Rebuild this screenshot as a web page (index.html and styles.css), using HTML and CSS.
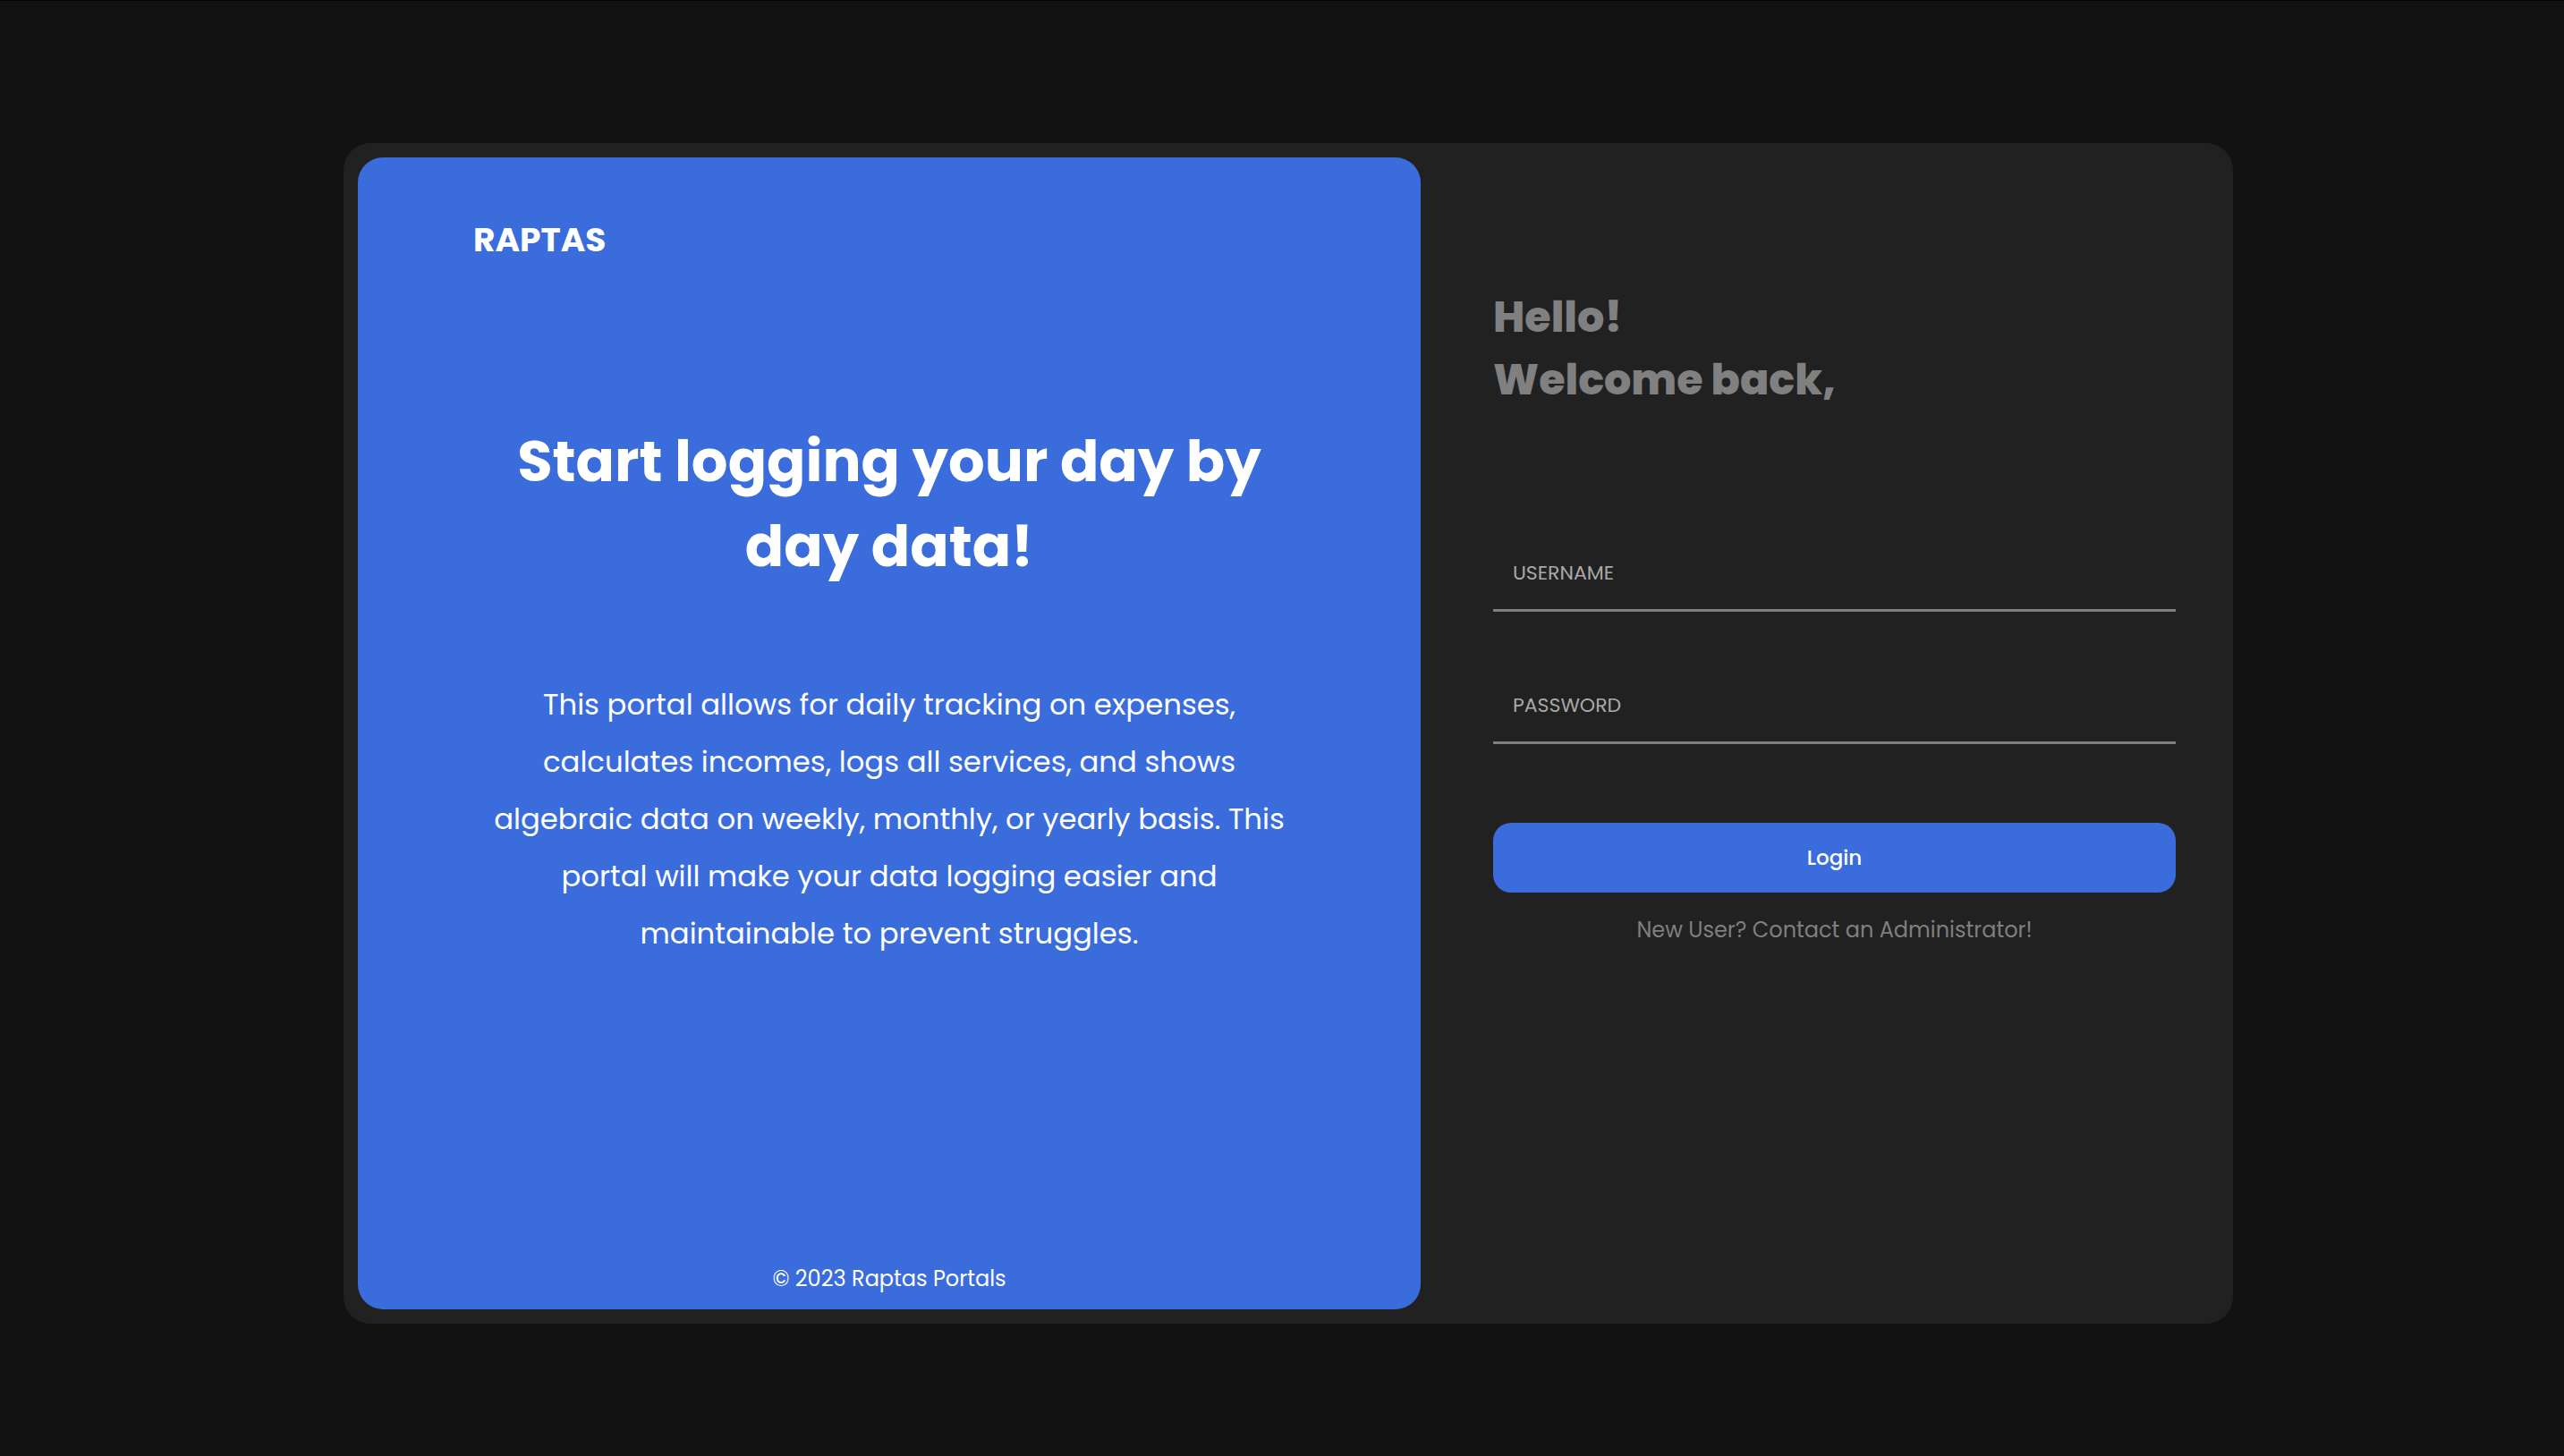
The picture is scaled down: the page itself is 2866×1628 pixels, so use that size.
FILE: index.html
```html
<!DOCTYPE html>
<html lang="en">
<head>
<meta charset="utf-8">
<title>Raptas Portals - Login</title>
<link rel="stylesheet" href="styles.css">
</head>
<body>
<div class="page">
  <main class="card">
    <section class="hero">
      <div class="brand">RAPTAS</div>
      <div class="hero-body">
        <h1 class="hero-title">Start logging your day by<br>day data!</h1>
        <p class="hero-text">This portal allows for daily tracking on expenses,<br>calculates incomes, logs all services, and shows<br>algebraic data on weekly, monthly, or yearly basis. This<br>portal will make your data logging easier and<br>maintainable to prevent struggles.</p>
      </div>
      <footer class="hero-footer">© 2023 Raptas Portals</footer>
    </section>
    <section class="login">
      <h2 class="greeting">Hello!<br>Welcome back,</h2>
      <form class="form">
        <input class="field" type="text" placeholder="USERNAME">
        <input class="field field-pass" type="password" placeholder="PASSWORD">
        <button class="btn" type="button">Login</button>
        <p class="note">New User? Contact an Administrator!</p>
      </form>
    </section>
  </main>
</div>
</body>
</html>
```
FILE: styles.css
```css
html, body {
  margin: 0;
  padding: 0;
}
body {
  background: #121212;
  border-top: 1px solid #050505;
  font-family: Poppins, Inter, "Noto Sans", sans-serif;
  min-height: 1627px;
}
.page {
  padding: 159px 370px 148px 384px;
}
.card {
  display: flex;
  width: 2112px;
  height: 1320px;
  box-sizing: border-box;
  padding: 16px;
  background: #212121;
  border-radius: 30px;
}
.hero {
  width: 1188px;
  flex: none;
  background: #3a6cdc;
  border-radius: 28px;
  color: #fff;
  display: flex;
  flex-direction: column;
  box-sizing: border-box;
  padding: 72px 0 22px 129px;
}
.brand {
  font-size: 37.5px;
  line-height: 40px;
  font-weight: 700;
}
.hero-body {
  margin-top: 180px;
  margin-left: -129px;
  text-align: center;
}
.hero-title {
  margin: 0;
  font-size: 64px;
  line-height: 95px;
  font-weight: 700;
}
.hero-text {
  margin: 98px 0 0;
  font-size: 32.3px;
  line-height: 64px;
  font-weight: 400;
}
.hero-footer {
  margin-top: auto;
  margin-left: -129px;
  text-align: center;
  font-size: 24px;
  line-height: 25px;
}
.login {
  flex: 1;
  padding: 144px 48px 0 81px;
}
.greeting {
  margin: 0;
  color: #808080;
  font-size: 47.6px;
  line-height: 70px;
  font-weight: 800;
}
.form {
  display: flex;
  flex-direction: column;
  margin-top: 154px;
}
.field {
  box-sizing: border-box;
  width: 100%;
  height: 70px;
  padding: 0 22px 15px;
  border: none;
  border-bottom: 3px solid #7f7f7f;
  background: transparent;
  color: #ddd;
  font-family: inherit;
  font-size: 22px;
  outline: none;
}
.field::placeholder {
  color: #a9a9a9;
}
.field-pass {
  margin-top: 78px;
}
.btn {
  margin-top: 88px;
  height: 78px;
  border: none;
  border-radius: 20px;
  background: #3a6cdc;
  color: #fff;
  font-family: inherit;
  font-size: 23px;
  font-weight: 500;
}
.note {
  margin: 27px 0 0;
  text-align: center;
  color: #7f7f7f;
  font-size: 24px;
  line-height: 30px;
}
```
